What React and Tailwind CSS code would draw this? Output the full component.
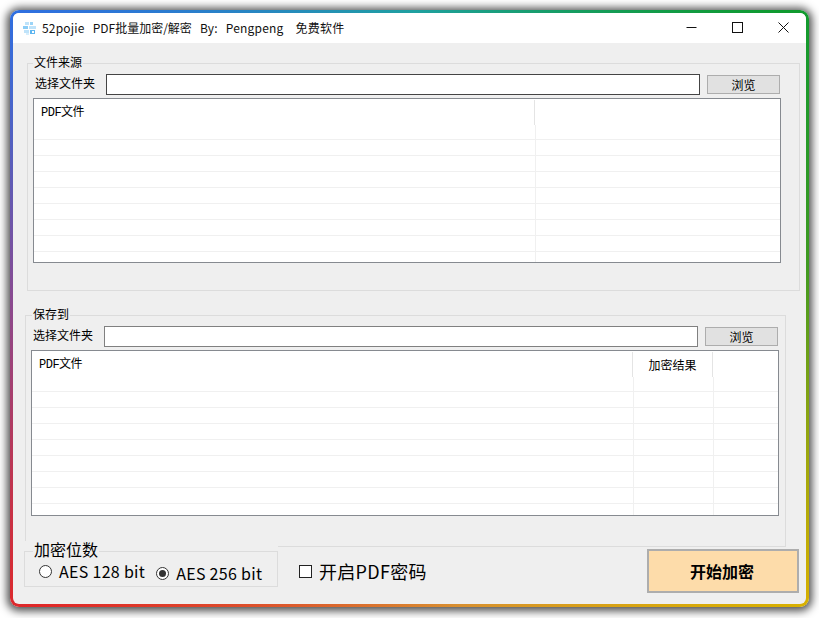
const FONT = "font-['Noto_Sans_CJK_SC','Liberation_Sans',sans-serif]";

// one list view: header plus the blank grid rows
function FileTable({ columns, tall }) {
  const rows = [0, 1, 2, 3, 4, 5, 6, 7, 8];
  return (
    <div className={`${tall ? 'h-[166px]' : 'h-[165px]'} w-[748px] overflow-hidden border border-[#868a90] bg-white pt-[1px]`}>
      <div className="flex h-[25px]">
        {columns.map((col, i) => (
          <div
            key={i}
            className={`flex shrink-0 items-start pt-[6px] text-[12px] leading-[14px] text-black ${col.center ? 'justify-center' : 'pl-[7px]'} ${i < columns.length - 1 ? 'border-r border-[#e4e4e4]' : ''} ${col.grow ? 'grow' : ''}`}
            style={col.grow ? undefined : { width: col.width }}
          >
            {col.mono ? <span className="font-['Liberation_Mono','Noto_Sans_CJK_SC',monospace] tracking-[-0.5px]">{col.label}</span> : col.label}
          </div>
        ))}
      </div>
      {rows.map((r) => (
        <div key={r} className={`flex ${r === 0 ? 'h-[15px]' : 'h-[16px]'} border-b border-[#f0f0f0] pr-[2px]`}>
          {columns.map((col, i) => (
            <div
              key={i}
              className={`shrink-0 ${i < columns.length - 1 ? 'border-r border-[#f0f0f0]' : ''} ${col.grow ? 'grow' : ''}`}
              style={col.grow ? undefined : { width: i === 0 ? col.width + 1 : col.width }}
            />
          ))}
        </div>
      ))}
    </div>
  );
}

function PickRow({ inputBorder }) {
  return (
    <div className="flex h-[21px] items-start">
      <span className="w-[73px] shrink-0 pl-[2px] text-[12px] leading-[18px] text-black">选择文件夹</span>
      <div className={`h-[21px] w-[594px] border bg-white ${inputBorder}`} />
      <button className="ml-[7px] mt-[1px] flex h-[19px] w-[73px] items-center justify-center border border-[#adadad] bg-[#e1e1e1] text-[12px] text-black">
        浏览
      </button>
    </div>
  );
}

function AppIcon() {
  return (
    <svg width="14" height="14" viewBox="0 0 14 14" className="shrink-0">
      <rect x="2" y="1" width="4" height="3" fill="#bfe3fa" />
      <rect x="7" y="1" width="3" height="3" fill="#9bd4f7" />
      <rect x="0" y="5" width="5" height="3" fill="#8ccdf6" />
      <rect x="6" y="5" width="7" height="3" fill="#bfe3fa" />
      <rect x="1" y="9" width="5" height="3" fill="#bfe3fa" />
      <rect x="7" y="9" width="5" height="4" fill="#5fb6f0" />
      <rect x="9" y="10" width="2" height="2" fill="#ffffff" />
      <rect x="3" y="12" width="3" height="2" fill="#d6eefc" />
    </svg>
  );
}

function Radio({ checked }) {
  return (
    <span className="flex h-[13px] w-[13px] shrink-0 items-center justify-center rounded-full border border-[#333] bg-white">
      {checked && <span className="h-[7px] w-[7px] rounded-full bg-[#333]" />}
    </span>
  );
}

export default function App() {
  return (
    <div className={`h-[618px] w-[819px] overflow-hidden bg-white p-[10px] ${FONT}`}>
      <div className="h-[597px] w-[799px] rounded-[9px] bg-[conic-gradient(from_307deg,#2f6fe0_0%,#1fa0a0_15%,#0f9a2f_29%,#3f9a20_38%,#d8b000_50%,#d89030_62%,#e02828_79%,#8a4a90_90%,#2f6fe0_100%)] p-[3px] shadow-[0_1px_8px_3px_rgba(0,0,0,0.7)]">
        <div className="h-full w-full overflow-hidden rounded-[6px] bg-[#efefef]">
          {/* title bar */}
          <div className="flex h-[30px] items-center bg-white">
            <div className="ml-[10px] flex items-center text-[12px] text-[#111]">
              <AppIcon />
              <span className="ml-[5px] tracking-[0.2px]">52pojie</span>
              <span className="ml-[8px]">PDF批量加密/解密</span>
              <span className="ml-[8px] tracking-[0.2px]">By:</span>
              <span className="ml-[8px] tracking-[0.2px]">Pengpeng</span>
              <span className="ml-[12px] tracking-[0.2px]">免费软件</span>
            </div>
            <div className="ml-auto flex items-center pb-[1px]">
              <svg width="11" height="11" viewBox="0 0 11 11" className="mr-[35px]">
                <path d="M0.5 5.5H10.5" stroke="#111" strokeWidth="1" />
              </svg>
              <svg width="11" height="11" viewBox="0 0 11 11" className="mr-[35px]">
                <rect x="0.5" y="0.5" width="10" height="10" fill="none" stroke="#111" strokeWidth="1" />
              </svg>
              <svg width="11" height="11" viewBox="0 0 11 11" className="mr-[17px]">
                <path d="M0.5 0.5L10.5 10.5M10.5 0.5L0.5 10.5" stroke="#111" strokeWidth="1" />
              </svg>
            </div>
          </div>

          {/* source group */}
          <div className="relative ml-[14px] mt-[20px] h-[228px] w-[773px] border border-[#dcdcdc] pl-[5px] pt-[10px]">
            <span className="absolute left-[5px] top-[-11px] bg-[#efefef] px-[1px] text-[12px] leading-[18px] text-black">文件来源</span>
            <PickRow inputBorder="border-[#444444]" />
            <div className="mt-[3px]">
              <FileTable columns={[{ label: 'PDF文件', width: 501, mono: true }, { label: '', grow: true }]} />
            </div>
          </div>

          {/* target group */}
          <div className="relative ml-[12px] mt-[24px] h-[232px] w-[761px] border border-[#dcdcdc] pl-[5px] pt-[10px]">
            <span className="absolute left-[6px] top-[-11px] bg-[#efefef] px-[1px] text-[12px] leading-[18px] text-black">保存到</span>
            <PickRow inputBorder="border-[#808080]" />
            <div className="mt-[3px]">
              <FileTable
                tall
                columns={[
                  { label: 'PDF文件', width: 601, mono: true },
                  { label: '加密结果', width: 80, center: true },
                  { label: '', grow: true },
                ]}
              />
            </div>
          </div>

          {/* bottom row */}
          <div className="relative z-10 mt-[-6px] flex items-start">
            <div className="ml-[11px] w-[254px] bg-[#efefef] pt-[10px]">
              <div className="relative h-[36px] w-[254px] border border-[#dcdcdc]">
                <span className="absolute left-[8px] top-[-12px] bg-[#efefef] px-[1px] text-[16px] leading-[18px] text-black">加密位数</span>
                <div className="flex h-full items-start pl-[14px] text-[16px] leading-[22px] tracking-[0.3px] text-black">
                  <div className="mt-[8px] flex items-center gap-[7px]">
                    <Radio />
                    <span>AES 128 bit</span>
                  </div>
                  <div className="ml-[11px] mt-[10px] flex items-center gap-[7px]">
                    <Radio checked />
                    <span>AES 256 bit</span>
                  </div>
                </div>
              </div>
            </div>
            <div className="ml-[21px] mt-[19px] flex items-center gap-[7px] text-[18px] leading-[24px] tracking-[0.3px] text-black">
              <span className="h-[13px] w-[13px] shrink-0 border border-[#222] bg-white" />
              <span className="mt-[-1px]">开启PDF密码</span>
            </div>
            <button className="ml-auto mr-[7px] mt-[8px] flex h-[44px] w-[152px] items-center justify-center border-2 border-[#adadad] bg-[#fddcaa] pr-[2px] text-[16px] font-bold text-black">
              开始加密
            </button>
          </div>
        </div>
      </div>
    </div>
  );
}
